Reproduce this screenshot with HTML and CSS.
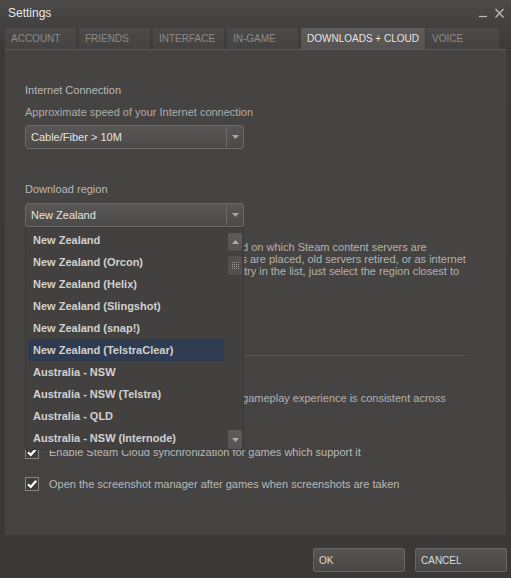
FILE: index.html
```html
<!DOCTYPE html>
<html>
<head>
<meta charset="utf-8">
<link rel="stylesheet" href="styles.css">
</head>
<body>
<div class="window">
  <div class="titlebar">
    <span class="title">Settings</span>
    <div class="controls">
      <svg class="ctl" width="8" height="20" viewBox="0 0 8 20"><line x1="0" y1="16.5" x2="8" y2="16.5" stroke="#bdbdbd" stroke-width="1.3"/></svg>
      <svg class="ctl" width="9" height="20" viewBox="0 0 9 20"><path d="M0.5 9L8.5 17.5M8.5 9L0.5 17.5" stroke="#bdbdbd" stroke-width="1.3" fill="none"/></svg>
    </div>
  </div>
  <div class="tabs">
    <div class="tab">ACCOUNT</div>
    <div class="tab">FRIENDS</div>
    <div class="tab">INTERFACE</div>
    <div class="tab">IN-GAME</div>
    <div class="tab active">DOWNLOADS + CLOUD</div>
    <div class="tab last">VOICE</div>
  </div>
  <div class="panel">
    <div class="heading">Internet Connection</div>
    <div class="label">Approximate speed of your Internet connection</div>
    <div class="select">
      <span class="value">Cable/Fiber &gt; 10M</span>
      <span class="arrow"><svg width="7" height="4" viewBox="0 0 7 4"><polygon points="0,0 7,0 3.5,4" fill="#a8a6a4"/></svg></span>
    </div>

    <div class="heading region-heading">Download region</div>
    <div class="select-wrap">
      <div class="select">
        <span class="value">New Zealand</span>
        <span class="arrow"><svg width="7" height="4" viewBox="0 0 7 4"><polygon points="0,0 7,0 3.5,4" fill="#a8a6a4"/></svg></span>
      </div>
      <div class="list">
        <div class="items">
          <div class="item">New Zealand</div>
          <div class="item">New Zealand (Orcon)</div>
          <div class="item">New Zealand (Helix)</div>
          <div class="item">New Zealand (Slingshot)</div>
          <div class="item">New Zealand (snap!)</div>
          <div class="item selected">New Zealand (TelstraClear)</div>
          <div class="item">Australia - NSW</div>
          <div class="item">Australia - NSW (Telstra)</div>
          <div class="item">Australia - QLD</div>
          <div class="item">Australia - NSW (Internode)</div>
        </div>
        <div class="scrollbar">
          <div class="sb-btn"><svg width="7" height="4" viewBox="0 0 7 4"><polygon points="0,4 7,4 3.5,0" fill="#b0aeac"/></svg></div>
          <div class="sb-thumb"><svg width="7" height="7" viewBox="0 0 7 7" fill="#9a9896"><rect x="0" y="0" width="1" height="1"/><rect x="2" y="0" width="1" height="1"/><rect x="4" y="0" width="1" height="1"/><rect x="6" y="0" width="1" height="1"/><rect x="0" y="2" width="1" height="1"/><rect x="2" y="2" width="1" height="1"/><rect x="4" y="2" width="1" height="1"/><rect x="6" y="2" width="1" height="1"/><rect x="0" y="4" width="1" height="1"/><rect x="2" y="4" width="1" height="1"/><rect x="4" y="4" width="1" height="1"/><rect x="6" y="4" width="1" height="1"/><rect x="0" y="6" width="1" height="1"/><rect x="2" y="6" width="1" height="1"/><rect x="4" y="6" width="1" height="1"/><rect x="6" y="6" width="1" height="1"/></svg></div>
          <div class="sb-space"></div>
          <div class="sb-btn down"><svg width="7" height="4" viewBox="0 0 7 4"><polygon points="0,0 7,0 3.5,4" fill="#b0aeac"/></svg></div>
        </div>
      </div>
    </div>
    <div class="desc">
      <span>Steam will select your download region based on which Steam content servers are</span>
      <span>The ideal region may change, as new servers are placed, old servers retired, or as internet</span>
      <span>If your country or region does not have an entry in the list, just select the region closest to</span>
      <span>you.</span>
    </div>

    <div class="sep"></div>

    <div class="heading cloud-heading">Steam Cloud</div>
    <div class="desc cloud-desc">
      <span>Steam Cloud saves your game data so your gameplay experience is consistent across</span>
      <span>computers.</span>
    </div>

    <div class="check-row first">
      <span class="cb"><svg width="12" height="12" viewBox="0 0 12 12"><path d="M2 6.2L4.8 9L10.2 2.8" stroke="#ffffff" stroke-width="2.2" fill="none"/></svg></span>
      <span class="cb-label">Enable Steam Cloud synchronization for games which support it</span>
    </div>
    <div class="check-row">
      <span class="cb"><svg width="12" height="12" viewBox="0 0 12 12"><path d="M2 6.2L4.8 9L10.2 2.8" stroke="#ffffff" stroke-width="2.2" fill="none"/></svg></span>
      <span class="cb-label">Open the screenshot manager after games when screenshots are taken</span>
    </div>
  </div>
  <div class="footer">
    <button class="btn">OK</button>
    <button class="btn">CANCEL</button>
  </div>
</div>
</body>
</html>
```

FILE: styles.css
```css
* { box-sizing: border-box; }

body {
  margin: 0;
  background: #3a3937;
  font-family: "Liberation Sans", Arial, sans-serif;
}

.window {
  width: 511px;
  height: 578px;
  background: linear-gradient(#4c4a48 0, #42403e 28px, #3d3b39 50px, #3a3937 100%);
  display: flex;
  flex-direction: column;
}

.titlebar {
  height: 28px;
  display: flex;
  padding: 0 7px 0 8px;
}

.title {
  margin-top: 6px;
  font-size: 12px;
  line-height: 14px;
  color: #e8e8e8;
}

.controls {
  margin-left: auto;
  display: flex;
  gap: 8px;
}

.tabs {
  display: flex;
  gap: 3px;
  padding-left: 5px;
  height: 21px;
}

.tab {
  width: 71px;
  height: 21px;
  padding-left: 6px;
  font-size: 10px;
  line-height: 21px;
  color: #8c8b8a;
  background: linear-gradient(#4c4a48, #454341);
  white-space: nowrap;
}

.tab.active {
  width: 124px;
  color: #e4e4e4;
  background: linear-gradient(#5e5c5a, #565452);
}

.tab.last {
  width: 73px;
  margin-left: -2px;
}

.panel {
  margin: 0 5px;
  height: 486px;
  border-top: 1px solid #5c5a58;
  background: #464442;
  padding: 33px 20px 0 20px;
}

.heading {
  font-size: 11px;
  line-height: 14px;
  color: #b9b8b7;
}

.label {
  margin-top: 8px;
  font-size: 11px;
  line-height: 14px;
  color: #aeadac;
}

.select {
  margin-top: 6px;
  width: 219px;
  height: 24px;
  display: flex;
  border: 1px solid #6c6a68;
  border-radius: 3px;
  background: linear-gradient(#595755, #4c4a48);
}

.select .value {
  flex: 1;
  padding-left: 5px;
  font-size: 11px;
  line-height: 22px;
  color: #e4e4e4;
}

.select .arrow {
  width: 17px;
  margin: 1px 0;
  border-left: 1px solid #6c6a68;
  display: flex;
  align-items: center;
  justify-content: center;
}

.region-heading {
  margin-top: 33px;
}

.select-wrap {
  position: relative;
  margin-top: 7px;
  width: 219px;
}

.select-wrap .select {
  margin-top: 0;
}

.list {
  position: absolute;
  top: 24px;
  left: 0;
  width: 219px;
  height: 223px;
  z-index: 5;
  display: flex;
  border: 1px solid #3c3a38;
  background: #43413f;
  padding: 0 1px 0 2px;
}

.items {
  width: 196px;
  padding-top: 1px;
}

.item {
  height: 22px;
  padding-left: 5px;
  font-size: 11px;
  font-weight: bold;
  line-height: 22px;
  color: #d2d1d0;
  white-space: nowrap;
}

.item.selected {
  background: #2f3b51;
}

.scrollbar {
  width: 14px;
  margin-left: 4px;
  display: flex;
  flex-direction: column;
  padding-top: 5px;
}

.sb-btn {
  height: 18px;
  background: linear-gradient(#5e5c5a, #555351);
  border-radius: 2px;
  display: flex;
  align-items: center;
  justify-content: center;
}

.sb-btn.down {
  height: 19px;
}

.sb-thumb {
  margin-top: 5px;
  height: 19px;
  background: #524f4d;
  border-radius: 2px;
  display: flex;
  align-items: center;
  justify-content: center;
}

.sb-space {
  flex: 1;
}

.desc {
  margin-top: 14px;
  font-size: 11px;
  line-height: 12px;
  color: #b3b2b1;
  white-space: nowrap;
}

.desc span {
  display: block;
}

.sep {
  margin-top: 66px;
  width: 441px;
  height: 1px;
  background: #5a5856;
}

.cloud-heading {
  margin-top: 12px;
}

.cloud-desc {
  margin-top: 10px;
}

.check-row {
  display: flex;
  align-items: center;
  gap: 10px;
  height: 14px;
  margin-top: 18px;
}

.check-row.first {
  margin-top: 29px;
}

.cb {
  width: 14px;
  height: 14px;
  border: 1px solid #8a8886;
  background: #3e3c3a;
  display: flex;
  align-items: center;
  justify-content: center;
}

.cb-label {
  font-size: 11px;
  line-height: 14px;
  color: #b9b8b7;
  white-space: nowrap;
}

.footer {
  display: flex;
  justify-content: flex-end;
  gap: 10px;
  padding: 13px 4px 0 0;
}

.btn {
  width: 92px;
  height: 24px;
  margin: 0;
  border: 1px solid #686664;
  border-radius: 2px;
  background: linear-gradient(#565452, #4a4846);
  color: #dcdcdc;
  font-family: "Liberation Sans", Arial, sans-serif;
  font-size: 10px;
  text-align: left;
  padding: 0 0 0 5px;
}
```
